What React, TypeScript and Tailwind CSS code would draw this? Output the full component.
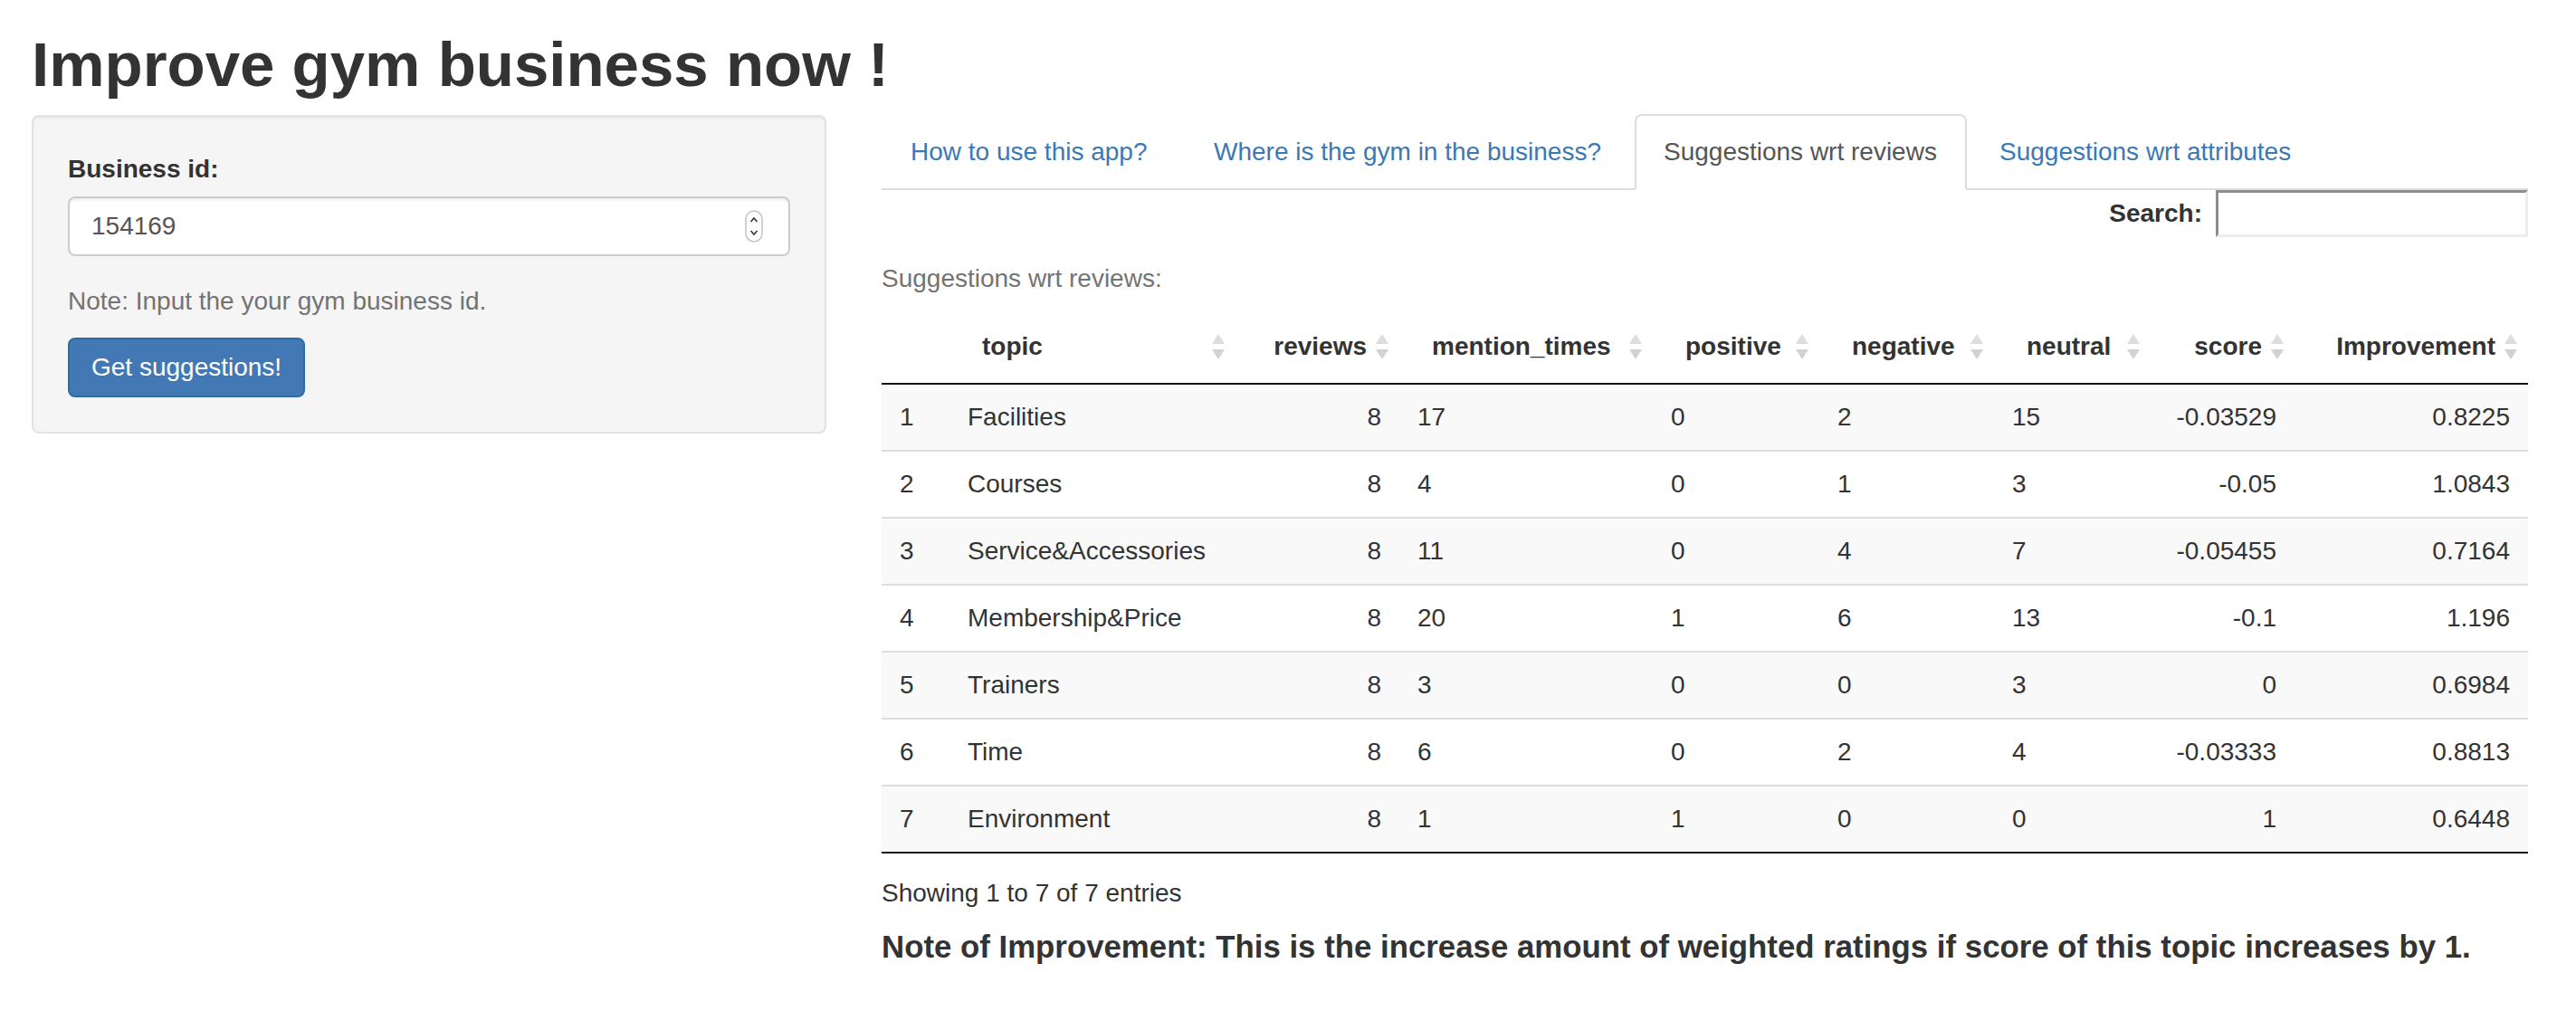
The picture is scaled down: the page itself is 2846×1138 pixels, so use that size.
import React from 'react';

const tabs = [
  { label: 'How to use this app?', width: 'w-[331px]', active: false },
  { label: 'Where is the gym in the business?', width: 'w-[493px]', active: false },
  { label: 'Suggestions wrt reviews', width: 'w-[367px]', active: true },
  { label: 'Suggestions wrt attributes', width: '', active: false },
];

type Col = { label: string; width: string; right: boolean; sort: boolean };

const columns: Col[] = [
  { label: '', width: 'w-[75px]', right: false, sort: false },
  { label: 'topic', width: 'w-[316px]', right: false, sort: true },
  { label: 'reviews', width: 'w-[181px]', right: true, sort: true },
  { label: 'mention_times', width: 'w-[280px]', right: false, sort: true },
  { label: 'positive', width: 'w-[184px]', right: false, sort: true },
  { label: 'negative', width: 'w-[193px]', right: false, sort: true },
  { label: 'neutral', width: 'w-[173px]', right: false, sort: true },
  { label: 'score', width: 'w-[159px]', right: true, sort: true },
  { label: 'Improvement', width: 'w-[258px]', right: true, sort: true },
];

const rows = [
  ['1', 'Facilities', '8', '17', '0', '2', '15', '-0.03529', '0.8225'],
  ['2', 'Courses', '8', '4', '0', '1', '3', '-0.05', '1.0843'],
  ['3', 'Service&Accessories', '8', '11', '0', '4', '7', '-0.05455', '0.7164'],
  ['4', 'Membership&Price', '8', '20', '1', '6', '13', '-0.1', '1.196'],
  ['5', 'Trainers', '8', '3', '0', '0', '3', '0', '0.6984'],
  ['6', 'Time', '8', '6', '0', '2', '4', '-0.03333', '0.8813'],
  ['7', 'Environment', '8', '1', '1', '0', '0', '1', '0.6448'],
];

const SortIcon: React.FC = () => (
  <svg width="16" height="30" viewBox="0 0 16 30" className="shrink-0">
    <path d="M8 1 L15 12 H1 Z" fill="#dddddd" />
    <path d="M1 18 H15 L8 29 Z" fill="#d2d2d2" />
  </svg>
);

const Spinner: React.FC = () => (
  <svg width="20" height="36" viewBox="0 0 20 36">
    <rect x="1" y="1" width="18" height="34" rx="9" fill="#fff" stroke="#c4c4c4" strokeWidth="1.5" />
    <path d="M6.5 13 L10 9 L13.5 13" fill="none" stroke="#333" strokeWidth="1.6" />
    <path d="M6.5 23 L10 27 L13.5 23" fill="none" stroke="#333" strokeWidth="1.6" />
  </svg>
);

const App: React.FC = () => {
  return (
    <div className="min-h-screen bg-white pl-[35px] pr-[53px] font-['Liberation_Sans',Arial,sans-serif] text-[28px] leading-[40px] text-[#333]">
      <h1 className="pt-[33px] text-[69px] font-bold leading-[77px] text-[#333]">Improve gym business now !</h1>

      <div className="mt-[16px] flex items-start gap-[61px]">
        {/* sidebar */}
        <div className="mt-[1px] w-[878px] shrink-0 rounded-lg border-2 border-[#e3e3e3] bg-[#f5f5f5] p-[38px] shadow-[inset_0_2px_2px_rgba(0,0,0,0.05)]">
          <label className="mb-[10px] block font-bold">Business id:</label>
          <div className="flex h-[66px] items-center justify-between rounded-lg border-2 border-[#ccc] bg-white pl-[24px] pr-[28px] text-[#555] shadow-[inset_0_2px_2px_rgba(0,0,0,0.075)]">
            <span>154169</span>
            <Spinner />
          </div>
          <p className="mt-[30px] text-[#737373]">Note: Input the your gym business id.</p>
          <button
            type="button"
            className="mt-[20px] rounded-lg border-2 border-[#2e6da4] bg-[#4279b5] px-6 py-[11px] leading-[40px] text-white"
          >
            Get suggestions!
          </button>
        </div>

        {/* main panel */}
        <div className="min-w-0 flex-1">
          <ul className="flex border-b-2 border-[#ddd]">
            {tabs.map((tab) => (
              <li key={tab.label} className={`-mb-[2px] mr-[4px] ${tab.width}`}>
                <a
                  className={
                    tab.active
                      ? 'block rounded-t-lg border-2 border-[#ddd] border-b-transparent bg-white px-[30px] py-5 text-[#555]'
                      : 'block rounded-t-lg border-2 border-transparent px-[30px] py-5 text-[#3a78b6]'
                  }
                >
                  {tab.label}
                </a>
              </li>
            ))}
          </ul>

          <div className="flex items-center justify-end">
            <span className="font-bold">Search:</span>
            <div className="ml-[15px] h-[52px] w-[345px] border-[3px] border-b-[#ececec] border-l-[#8e8e8e] border-r-[#ececec] border-t-[#8e8e8e] bg-white" />
          </div>

          <p className="mt-[26px] text-[#737373]">Suggestions wrt reviews:</p>

          <table className="mt-[15px] w-full table-fixed border-collapse">
            <thead>
              <tr>
                {columns.map((col, i) => (
                  <th key={i} className={`${col.width} border-b-2 border-[#111] py-5 pl-[36px] pr-[11px] font-bold`}>
                    {col.sort && (
                      <div className="flex items-center gap-[9px]">
                        <span className={`flex-1 ${col.right ? 'text-right' : 'text-left'}`}>{col.label}</span>
                        <SortIcon />
                      </div>
                    )}
                  </th>
                ))}
              </tr>
            </thead>
            <tbody>
              {rows.map((row, r) => (
                <tr key={r} className={r % 2 === 0 ? 'bg-[#f9f9f9]' : 'bg-white'}>
                  {row.map((cell, c) => (
                    <td
                      key={c}
                      className={`px-5 py-4 ${columns[c].right ? 'text-right' : 'text-left'} ${
                        r > 0 ? 'border-t-2 border-[#ddd]' : ''
                      } ${r === rows.length - 1 ? 'border-b-2 border-b-[#111]' : ''}`}
                    >
                      {cell}
                    </td>
                  ))}
                </tr>
              ))}
            </tbody>
          </table>

          <p className="mt-[24px]">Showing 1 to 7 of 7 entries</p>
          <h4 className="mt-[19px] text-[34.8px] font-bold leading-[40px]">
            Note of Improvement: This is the increase amount of weighted ratings if score of this topic increases by 1.
          </h4>
        </div>
      </div>
    </div>
  );
};

export default App;
